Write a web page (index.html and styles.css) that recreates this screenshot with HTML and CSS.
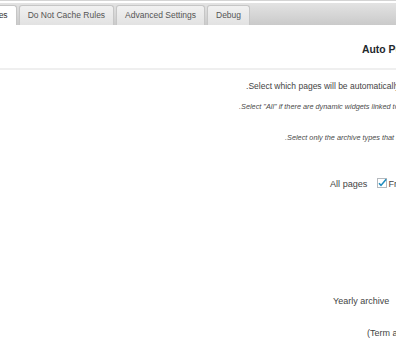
FILE: index.html
```html
<!DOCTYPE html>
<html lang="en">
<head>
  <meta charset="UTF-8">
  <meta name="viewport" content="width=device-width, initial-scale=1.0">
  <title>Auto Purge Rules</title>
  <link rel="stylesheet" href="styles.css">
</head>
<body>
  <div class="tabbar">
    <nav class="tabs">
      <a class="tab active first" href="#">Auto Purge Rules</a>
      <a class="tab" href="#">Do Not Cache Rules</a>
      <a class="tab" href="#">Advanced Settings</a>
      <a class="tab" href="#">Debug</a>
    </nav>
  </div>

  <div class="panel">
    <h2 class="panel-title" dir="rtl">Auto Purge Rules</h2>
    <hr class="sep">

    <p class="intro" dir="rtl">Select which pages will be automatically purged when a post is published or updated.</p>
    <p class="hint hint-all" dir="rtl">Select "All" if there are dynamic widgets linked to posts on all of your pages.</p>
    <p class="hint hint-archive" dir="rtl">Select only the archive types that are used on your site.</p>

    <div class="opt-row row-pages">
      <span class="opt-label">All pages</span>
      <span class="check">
        <svg width="10" height="10" viewBox="0 0 10 10">
          <rect x="0.5" y="0.5" width="9" height="9" fill="#fff" stroke="#b4b9be"/>
          <path d="M2 5.2 L4 7.4 L9.2 1.2" fill="none" stroke="#1e8cbe" stroke-width="1.6"/>
        </svg>
      </span>
      <span class="opt-value">Front page</span>
    </div>

    <div class="opt-row row-yearly">
      <span class="opt-label">Yearly archive</span>
    </div>

    <div class="opt-row row-term">
      <span class="opt-label">(Term archives)</span>
    </div>
  </div>
</body>
</html>
```

FILE: styles.css
```css
/* Settings page, scaled-down admin look */
body {
  font-family: "Liberation Sans", Arial, sans-serif;
  background-color: #fff;
  color: #444;
  margin: 0;
  padding: 0;
  overflow: hidden;
  white-space: nowrap;
}

/* tab strip */
.tabbar {
  border-top: 1px solid #d4d4d4;
  padding-top: 2px;
}
.tabs {
  display: flex;
  gap: 2px;
  height: 22px;
  padding-top: 2px;
  box-sizing: border-box;
  background: linear-gradient(#e3e3e3, #cacaca);
}
.tab {
  display: block;
  height: 20px;
  line-height: 19px;
  padding: 0 8px;
  font-size: 8.5px;
  color: #555;
  text-decoration: none;
  background: linear-gradient(#f1f1f1, #e2e2e2);
  border: 1px solid #c6c6c6;
  border-bottom: none;
  border-radius: 3px 3px 0 0;
  box-sizing: border-box;
}
.tab.first {
  margin-left: -68px;
}
.tab.active {
  background: #fff;
  color: #333;
}

/* panel */
.panel {
  padding-top: 19px;
}
.panel-title {
  width: max-content;
  margin: 0 0 0 362px;
  font-size: 10.4px;
  line-height: 12px;
  font-weight: bold;
  color: #23282d;
}
.sep {
  margin: 12px 0 0 0;
  border: none;
  height: 2px;
  background-color: #efefef;
}
.intro {
  width: max-content;
  margin: 11px 0 0 246px;
  font-size: 8.5px;
  line-height: 11px;
  color: #444;
}
.hint {
  width: max-content;
  font-size: 7.3px;
  line-height: 9px;
  font-style: italic;
  color: #4a4a4a;
}
.hint-all {
  margin: 10px 0 0 239px;
}
.hint-archive {
  margin: 22px 0 0 285px;
}

/* option rows */
.opt-row {
  display: flex;
  align-items: flex-start;
  width: max-content;
  font-size: 9px;
  line-height: 12px;
  color: #444;
}
.row-pages {
  margin: 36px 0 0 330px;
  font-size: 9.1px;
}
.row-yearly {
  margin: 105px 0 0 333px;
}
.row-term {
  margin: 20px 0 0 367px;
}
.check {
  display: block;
  width: 10px;
  height: 10px;
  margin: 0 1px 0 10px;
}
.check svg {
  display: block;
}
.opt-value {
  color: #444;
}
```
